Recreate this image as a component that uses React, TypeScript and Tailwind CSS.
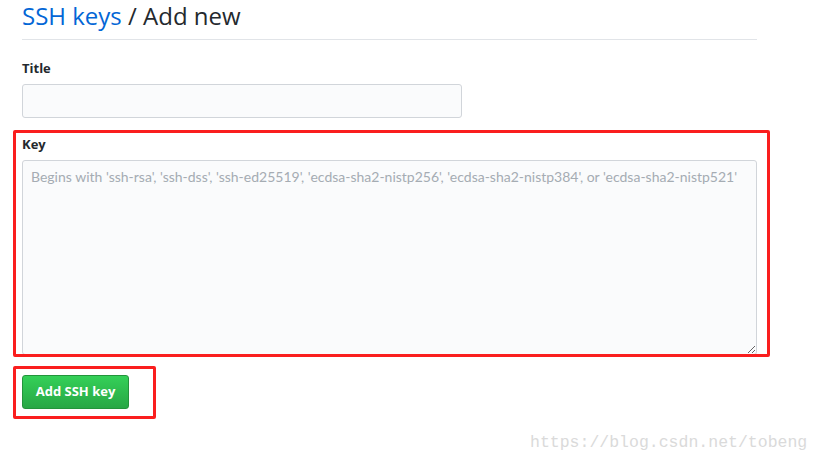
export default function App() {
  return (
    <div className="relative h-[463px] w-[820px] overflow-hidden bg-white font-['Open_Sans',sans-serif] text-[#24292e]">
      <div className="w-[735px] pl-[22px] box-content">
        {/* Header */}
        <div className="border-b border-[#e1e4e8] pb-[7px]">
          <h2 className="text-[24px] leading-[32px] font-normal">
            <span className="text-[#0366d6]">SSH keys</span> / Add new
          </h2>
        </div>

        {/* Title */}
        <div className="mt-[18px]">
          <label className="block text-[13px] font-bold leading-[20px]">Title</label>
          <input
            type="text"
            className="mt-[6px] block h-[34px] w-[440px] rounded-[3px] border border-[#d1d5da] bg-[#fafbfc] px-2 text-sm outline-none"
          />
        </div>

        {/* Key */}
        <div className="mt-[16px]">
          <label className="block text-[13px] font-bold leading-[20px]">Key</label>
          <textarea
            className="mt-[6px] block h-[195px] w-[735px] resize-y rounded-[3px] border border-[#d1d5da] bg-[#fafbfc] px-[8px] py-[6px] font-['Lato',sans-serif] text-[14px] leading-[20px] outline-none placeholder:text-[#a5acb3]"
            placeholder="Begins with 'ssh-rsa', 'ssh-dss', 'ssh-ed25519', 'ecdsa-sha2-nistp256', 'ecdsa-sha2-nistp384', or 'ecdsa-sha2-nistp521'"
          />
        </div>

        <button className="mt-[20px] h-[34px] w-[107px] rounded-[3px] border border-[#23943b] bg-gradient-to-b from-[#34d058] to-[#28a745] text-[13px] font-bold text-white">
          Add SSH key
        </button>
      </div>

      {/* Red annotation boxes */}
      <div className="absolute left-[13px] top-[130px] h-[227px] w-[757px] rounded-[2px] border-[3px] border-[#fa1e1e]" />
      <div className="absolute left-[13px] top-[366px] h-[53px] w-[143px] rounded-[2px] border-[3px] border-[#fa1e1e]" />

      {/* Watermark */}
      <div className="absolute left-[530px] top-[432px] font-['Liberation_Mono',monospace] text-[16.5px] leading-[22px] text-[#dadada]">
        https://blog.csdn.net/tobeng
      </div>
    </div>
  );
}
